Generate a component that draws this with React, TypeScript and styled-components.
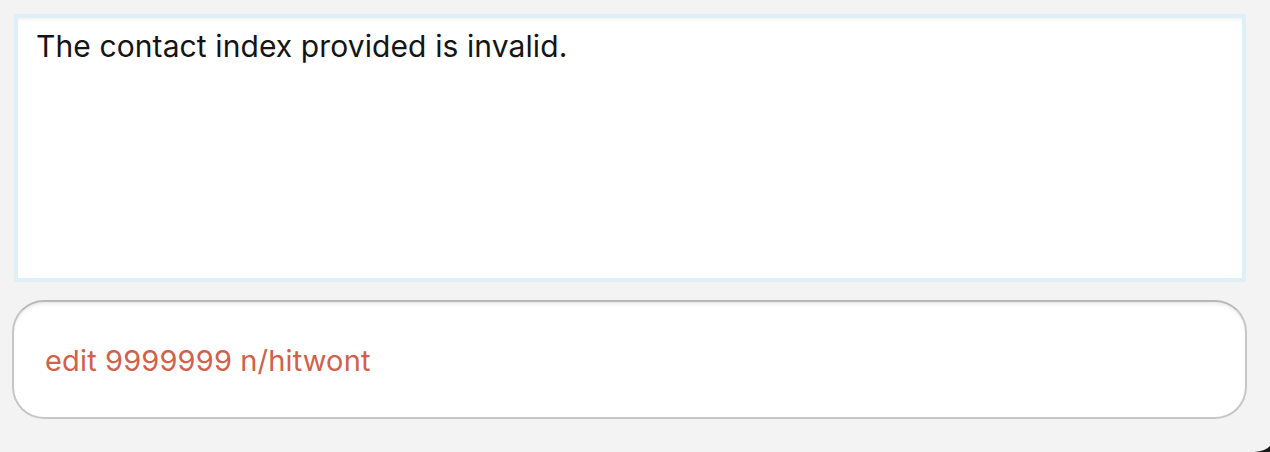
import React from "react";
import styled, { createGlobalStyle } from "styled-components";

const Global = createGlobalStyle`
  html, body {
    margin: 0;
    padding: 0;
    background: #f3f3f3;
    font-family: Inter, "Noto Sans", sans-serif;
  }
  body { width: 1270px; height: 452px; overflow: hidden; }
`;

const Page = styled.div`
  display: flex;
  flex-direction: column;
  gap: 18px;
  padding: 14px 23px 0 12px;
  height: 452px;
  box-sizing: border-box;
  position: relative;
`;

const ResultBox = styled.div`
  margin: 0 1px 0 2px;
  height: 268px;
  box-sizing: border-box;
  background: #ffffff;
  border: 4px solid #dfeff8;
  box-shadow: inset 0 3px 4px -2px rgba(0, 0, 0, 0.08);
  padding: 10px 18px;
  font-size: 30px;
  color: #141414;
  letter-spacing: 0.1px;
`;

const CommandBox = styled.div`
  height: 119px;
  box-sizing: border-box;
  background: #ffffff;
  border: 2px solid #c6c6c6;
  border-top-color: #b8b8b8;
  border-radius: 32px;
  box-shadow: inset 0 4px 5px -3px rgba(0, 0, 0, 0.12);
  display: flex;
  align-items: center;
  padding: 2px 31px 0;
  font-size: 29px;
  color: #d0614c;
  letter-spacing: 0.15px;
`;

const Corner = styled.svg`
  position: absolute;
  right: 0;
  bottom: 0;
`;

export default function App() {
  return (
    <>
      <Global />
      <Page>
        <ResultBox>The contact index provided is invalid.</ResultBox>
        <CommandBox>edit 9999999 n/hitwont</CommandBox>
        <Corner width="16" height="8" viewBox="0 0 16 8">
          <path d="M0 8 Q12 7 16 2 L16 8 Z" fill="#1a1a1a" />
        </Corner>
      </Page>
    </>
  );
}
